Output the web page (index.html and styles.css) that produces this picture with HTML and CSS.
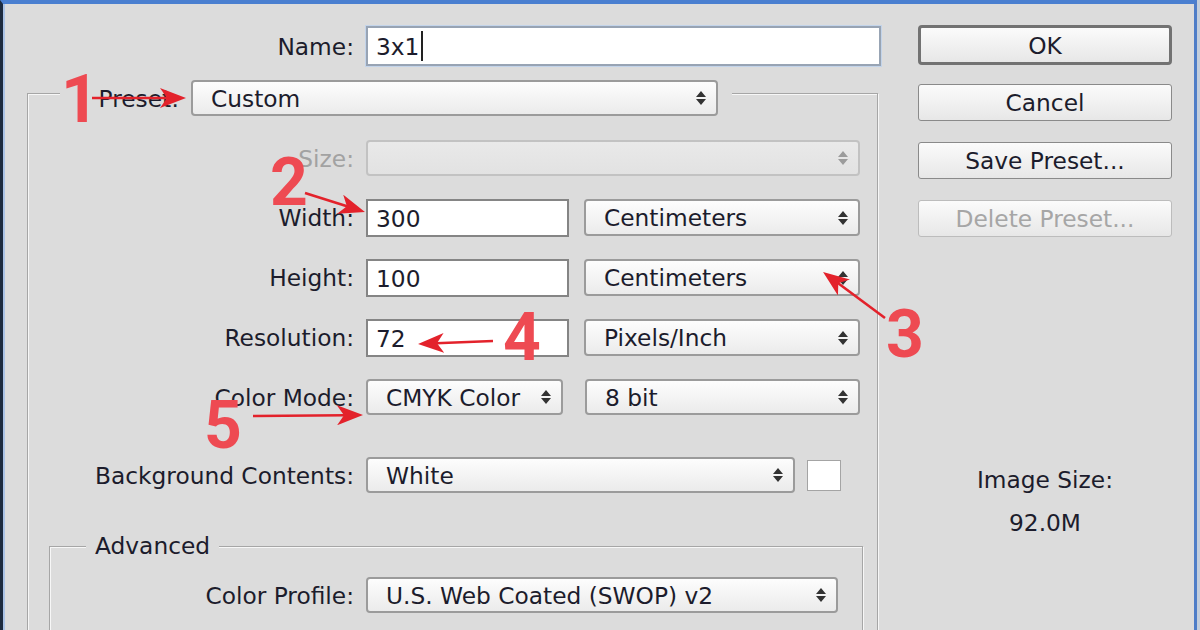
FILE: index.html
```html
<!DOCTYPE html>
<html>
<head>
<meta charset="utf-8">
<link rel="stylesheet" href="styles.css">
</head>
<body>
<div class="window">
  <div class="main">
    <div class="row name-row">
      <span class="lbl">Name:</span>
      <div class="input name-input">3x1<span class="caret"></span></div>
    </div>

    <div class="group outer">
      <div class="head">
        <span class="lbl preset-lbl">Preset:</span>
        <div class="select w-preset"><span>Custom</span><svg class="updown" viewBox="0 0 10 14" width="10" height="14"><path d="M0 6 L5 0 L10 6 Z M0 8 L10 8 L5 14 Z"/></svg></div>
      </div>

      <div class="row r-size">
        <span class="lbl dim">Size:</span>
        <div class="select dis w-size"><span></span><svg class="updown" viewBox="0 0 10 14" width="10" height="14"><path d="M0 6 L5 0 L10 6 Z M0 8 L10 8 L5 14 Z"/></svg></div>
      </div>

      <div class="row r-dim first">
        <span class="lbl">Width:</span>
        <div class="input w-num">300</div>
        <div class="select w-unit"><span>Centimeters</span><svg class="updown" viewBox="0 0 10 14" width="10" height="14"><path d="M0 6 L5 0 L10 6 Z M0 8 L10 8 L5 14 Z"/></svg></div>
      </div>

      <div class="row r-dim">
        <span class="lbl">Height:</span>
        <div class="input w-num">100</div>
        <div class="select w-unit"><span>Centimeters</span><svg class="updown" viewBox="0 0 10 14" width="10" height="14"><path d="M0 6 L5 0 L10 6 Z M0 8 L10 8 L5 14 Z"/></svg></div>
      </div>

      <div class="row r-dim">
        <span class="lbl">Resolution:</span>
        <div class="input w-num">72</div>
        <div class="select w-unit"><span>Pixels/Inch</span><svg class="updown" viewBox="0 0 10 14" width="10" height="14"><path d="M0 6 L5 0 L10 6 Z M0 8 L10 8 L5 14 Z"/></svg></div>
      </div>

      <div class="row r-mode">
        <span class="lbl">Color Mode:</span>
        <div class="select w-mode"><span>CMYK Color</span><svg class="updown" viewBox="0 0 10 14" width="10" height="14"><path d="M0 6 L5 0 L10 6 Z M0 8 L10 8 L5 14 Z"/></svg></div>
        <div class="select w-bit"><span>8 bit</span><svg class="updown" viewBox="0 0 10 14" width="10" height="14"><path d="M0 6 L5 0 L10 6 Z M0 8 L10 8 L5 14 Z"/></svg></div>
      </div>

      <div class="row r-bg">
        <span class="lbl">Background Contents:</span>
        <div class="select w-bgsel"><span>White</span><svg class="updown" viewBox="0 0 10 14" width="10" height="14"><path d="M0 6 L5 0 L10 6 Z M0 8 L10 8 L5 14 Z"/></svg></div>
        <div class="swatch"></div>
      </div>

      <div class="group adv">
        <div class="adv-legend">Advanced</div>
        <div class="row r-profile">
          <span class="lbl">Color Profile:</span>
          <div class="select w-profile"><span>U.S. Web Coated (SWOP) v2</span><svg class="updown" viewBox="0 0 10 14" width="10" height="14"><path d="M0 6 L5 0 L10 6 Z M0 8 L10 8 L5 14 Z"/></svg></div>
        </div>
      </div>
    </div>
  </div>

  <div class="side">
    <div class="btn ok">OK</div>
    <div class="btn">Cancel</div>
    <div class="btn">Save Preset...</div>
    <div class="btn dis">Delete Preset...</div>
    <div class="info info-title">Image Size:</div>
    <div class="info info-value">92.0M</div>
  </div>

  <svg class="annot" viewBox="0 0 1200 630" width="1200" height="630">
    <defs>
      <marker id="ah" markerUnits="userSpaceOnUse" viewBox="0 0 26 20" markerWidth="26" markerHeight="20" refX="8" refY="10" orient="auto">
        <path d="M0 0 L26 10 L0 20 L7 10 Z" fill="#e3222b"/>
      </marker>
    </defs>
    <g stroke="#e3222b" stroke-width="2.6" fill="none">
      <line x1="92" y1="98" x2="168" y2="98" marker-end="url(#ah)"/>
      <line x1="305" y1="193" x2="347.8" y2="206.6" marker-end="url(#ah)"/>
      <line x1="885" y1="318" x2="837.5" y2="282.7" marker-end="url(#ah)"/>
      <line x1="493" y1="341" x2="436" y2="343.3" marker-end="url(#ah)"/>
      <line x1="253" y1="416" x2="345" y2="415.2" marker-end="url(#ah)"/>
    </g>
    <g class="nums" text-anchor="middle">
      <text x="80" y="122">1</text>
      <text x="289" y="205">2</text>
      <text x="905" y="357">3</text>
      <text x="522" y="360">4</text>
      <text x="223" y="448">5</text>
    </g>
  </svg>
</div>
</body>
</html>
```

FILE: styles.css
```css
html, body {
  margin: 0;
  padding: 0;
}

body {
  width: 1200px;
  height: 630px;
  overflow: hidden;
  background: #c4cedb;
  font-family: "DejaVu Sans", Verdana, sans-serif;
  font-size: 23.3px;
  color: #1c1c2c;
}

.window {
  position: relative;
  box-sizing: border-box;
  width: 1197px;
  height: 630px;
  border-top: 4px solid #4a7fd0;
  border-left: 3px solid #1d2b3f;
  border-right: 3px solid #4f7dc7;
  background: #dcdcdc;
  box-shadow: inset 2px 0 0 #abc3e6;
  display: flex;
  overflow: hidden;
}

.main {
  width: 902px;
  flex: none;
}

.side {
  width: 254px;
  margin-left: 13px;
  padding-top: 21px;
  flex: none;
  display: flex;
  flex-direction: column;
}

/* rows */
.row {
  display: flex;
  align-items: center;
}

.lbl {
  flex: none;
  text-align: right;
  margin-right: 12px;
  white-space: nowrap;
}

.dim {
  color: #a2a2a2;
}

.name-row {
  margin-top: 22px;
}

.name-row .lbl {
  width: 351px;
}

/* inputs */
.input {
  box-sizing: border-box;
  height: 38px;
  background: #fff;
  border: 2px solid #858585;
  display: flex;
  align-items: center;
  padding-left: 8px;
  flex: none;
}

.name-input {
  width: 515px;
  height: 40px;
  border: 2px solid #98a4b4;
  box-shadow: 0 0 0 1px #c3d4ea;
}

.caret {
  width: 2px;
  height: 30px;
  background: #222;
  margin-left: 2px;
}

/* selects */
.select {
  box-sizing: border-box;
  height: 36px;
  border: 2px solid #9b9b9b;
  border-radius: 4px;
  background: linear-gradient(#fdfdfd, #ebebeb);
  display: flex;
  align-items: center;
  justify-content: space-between;
  padding: 0 10px 0 18px;
  flex: none;
  white-space: nowrap;
}

.updown {
  fill: #333;
  flex: none;
}

.select.dis {
  border-color: #c2c2c2;
  background: linear-gradient(#e9e9e9, #e2e2e2);
}

.select.dis .updown {
  fill: #9c9c9c;
}

/* group boxes */
.group {
  box-sizing: border-box;
  border: 1px solid #a6a6a6;
  border-bottom: none;
  box-shadow: inset 1px 1px 0 #f7f7f7, 1px 1px 0 #f7f7f7;
}

.outer {
  margin: 27px 0 0 24px;
  width: 851px;
  height: 620px;
}

.outer .lbl {
  width: 326px;
}

.head {
  display: flex;
  align-items: center;
  width: max-content;
  margin: -14px 0 0 32px;
  padding-right: 14px;
  background: #dcdcdc;
}

.outer .head .preset-lbl {
  width: 119px;
}

.w-preset {
  width: 527px;
}

.r-size {
  margin-top: 24px;
}

.w-size {
  width: 494px;
}

.r-dim {
  margin-top: 22px;
  align-items: flex-start;
}

.r-dim.first {
  margin-top: 23px;
}

.r-dim .lbl {
  line-height: 38px;
}

.w-num {
  width: 203px;
}

.w-unit {
  width: 276px;
  height: 37px;
  margin-left: 15px;
}

.r-mode {
  margin-top: 22px;
}

.w-mode {
  width: 197px;
}

.w-bit {
  width: 275px;
  margin-left: 22px;
}

.r-bg {
  margin-top: 42px;
}

.w-bgsel {
  width: 429px;
}

.swatch {
  box-sizing: border-box;
  width: 34px;
  height: 31px;
  margin-left: 12px;
  background: #fff;
  border: 1px solid #a4a4a4;
  flex: none;
}

.adv {
  margin: 53px 0 0 21px;
  width: 814px;
  height: 200px;
}

.adv .lbl {
  width: 304px;
}

.adv-legend {
  width: max-content;
  margin: -14px 0 0 36px;
  padding: 0 9px;
  line-height: 26px;
  background: #dcdcdc;
}

.r-profile {
  margin-top: 18px;
}

.w-profile {
  width: 472px;
}

/* buttons */
.btn {
  box-sizing: border-box;
  height: 37px;
  border: 1px solid #8a8a8a;
  border-radius: 3px;
  background: linear-gradient(#fbfbfb, #e7e7e7);
  display: flex;
  align-items: center;
  justify-content: center;
  margin-top: 21px;
  white-space: nowrap;
}

.btn.ok {
  height: 40px;
  margin-top: 0;
  border: 3px solid #727272;
  border-radius: 4px;
}

.btn.ok + .btn {
  margin-top: 19px;
}

.btn.dis {
  color: #a6a6a6;
  border-color: #bcbcbc;
}

.info {
  text-align: center;
  line-height: 30px;
}

.info-title {
  margin-top: 228px;
}

.info-value {
  margin-top: 13px;
}

/* annotations */
.annot {
  position: absolute;
  left: -3px;
  top: -4px;
  pointer-events: none;
}

.nums text {
  font-family: Roboto, "DejaVu Sans", sans-serif;
  font-weight: 700;
  font-size: 66px;
  fill: #ee4a52;
}
```
